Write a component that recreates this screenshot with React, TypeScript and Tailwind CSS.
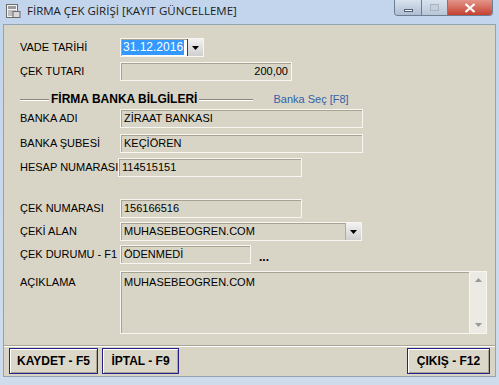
import React from 'react';

const font = { fontFamily: '"Liberation Sans", Arial, sans-serif' };

const Caret = () => (
  <svg width="7" height="4" viewBox="0 0 7 4">
    <path d="M0 0h7L3.5 4z" fill="#000" />
  </svg>
);

function Field({ w, value, right }: { w: number; value?: string; right?: boolean }) {
  return (
    <div
      className={`h-[19px] border border-[#f7f6f1] shadow-[inset_1px_1px_0_#a7a393] bg-[#d9d5c6] flex items-center px-[3px] text-[11px] text-black ${right ? 'justify-end' : ''}`}
      style={{ width: w }}
    >
      {value}
    </div>
  );
}

function Row({ label, children, mt }: { label: string; children: React.ReactNode; mt: string }) {
  return (
    <div className={`flex items-center ${mt}`}>
      <div className="w-[100px] text-[11px] text-black leading-none">{label}</div>
      {children}
    </div>
  );
}

function Btn({ children, w }: { children: React.ReactNode; w: string }) {
  return (
    <div className={`${w} h-[26px] border border-[#25238a] shadow-[inset_1px_1px_0_#fff,inset_-1px_-1px_0_#a8a496] bg-[#dcd8c9] flex items-center justify-center text-[12px] font-bold text-black`}>
      {children}
    </div>
  );
}

export default function App() {
  return (
    <div className="w-[499px] h-[385px] bg-gradient-to-b from-[#c2d5ec] to-[#cfdcec] flex flex-col overflow-hidden" style={font}>
      {/* title bar */}
      <div className="h-[24px] flex items-start shrink-0 relative">
        <div className="flex items-center h-[22px] pl-[5px] gap-[6px]">
          <svg width="16" height="16" viewBox="0 0 16 16">
            <rect x="1.5" y="1.5" width="11" height="13" fill="#f4f4f4" stroke="#6b6b6b" />
            <rect x="3" y="3" width="8" height="3" fill="#9a9a9a" />
            <path d="M3 8h8M3 10h6M3 12h7" stroke="#8a8a8a" />
            <rect x="8" y="8.5" width="7" height="6" fill="#d8d8d8" stroke="#6b6b6b" />
          </svg>
          <span className="text-[11.5px] text-[#1b1b1b]" style={{ fontFamily: '"Open Sans", "Liberation Sans", sans-serif' }}>
            FİRMA ÇEK GİRİŞİ [KAYIT GÜNCELLEME]
          </span>
        </div>
        <div className="absolute right-[6px] top-0 flex h-[16px] rounded-b-[4px] overflow-hidden border border-t-0 border-[#6d7d93]">
          <div className="w-[27px] bg-gradient-to-b from-[#d9e3ef] to-[#aebdd1] flex items-center justify-center border-r border-[#6d7d93]">
            <div className="w-[9px] h-[3px] bg-white border border-[#4f5e73] mt-[5px]" />
          </div>
          <div className="w-[26px] bg-gradient-to-b from-[#d9e3ef] to-[#b9c6d6] flex items-center justify-center border-r border-[#6d7d93]">
            <div className="w-[9px] h-[7px] border border-[#a9b4c3] bg-[#c6d0dc]" />
          </div>
          <div className="w-[44px] bg-gradient-to-b from-[#e3948a] to-[#c3402e] flex items-center justify-center">
            <svg width="12" height="10" viewBox="0 0 12 10">
              <path d="M1.5 1l9 8M10.5 1l-9 8" stroke="#fff" strokeWidth="2.2" />
            </svg>
          </div>
        </div>
      </div>

      {/* client */}
      <div className="flex-1 mx-[3px] mb-[8px] bg-[#d9d5c6] border border-[#93a3b6] flex flex-col">
        <div className="flex-1 pl-[16px] pt-[13px] flex flex-col">
          <Row label="VADE TARİHİ" mt="mt-0">
            <div className="h-[19px] w-[84px] border border-[#f7f6f1] shadow-[inset_1px_1px_0_#a7a393] bg-white flex">
              <div className="flex-1 flex items-center pl-[1px]">
                <span className="bg-[#3399ff] text-white text-[12px] leading-[15px] px-[1px]">31.12.2016</span>
              </div>
              <div className="w-[16px] border-l border-[#404040] bg-gradient-to-b from-[#f2f2f2] to-[#cfcfcf] flex items-center justify-center">
                <Caret />
              </div>
            </div>
          </Row>
          <Row label="ÇEK TUTARI" mt="mt-[5px]">
            <Field w={172} value="200,00" right />
          </Row>

          <div className="flex items-center mt-[9px] h-[18px]">
            <div className="w-[29px] h-px bg-[#8b8878] shadow-[0_1px_0_#fff]" />
            <span className="text-[12px] font-bold text-black px-[2px]">FİRMA BANKA BİLGİLERİ</span>
            <div className="w-[54px] h-px bg-[#8b8878] shadow-[0_1px_0_#fff]" />
            <span className="ml-[20px] text-[11px] text-[#3461a8]">Banka Seç [F8]</span>
          </div>

          <Row label="BANKA ADI" mt="mt-[1px]">
            <Field w={243} value="ZİRAAT BANKASI" />
          </Row>
          <Row label="BANKA ŞUBESİ" mt="mt-[6px]">
            <Field w={243} value="KEÇİÖREN" />
          </Row>
          <Row label="HESAP NUMARASI" mt="mt-[5px]">
            <div className="-ml-[2px]">
              <Field w={184} value="114515151" />
            </div>
          </Row>

          <Row label="ÇEK NUMARASI" mt="mt-[22px]">
            <Field w={182} value="156166516" />
          </Row>
          <Row label="ÇEKİ ALAN" mt="mt-[4px]">
            <div className="h-[19px] w-[242px] border border-[#f7f6f1] shadow-[inset_1px_1px_0_#a7a393] bg-[#d9d5c6] flex">
              <div className="flex-1 flex items-center px-[3px] text-[11px]">MUHASEBEOGREN.COM</div>
              <div className="w-[16px] border-l border-[#b0ad9f] bg-gradient-to-b from-[#f2f2f2] to-[#cfcfcf] flex items-center justify-center">
                <Caret />
              </div>
            </div>
          </Row>
          <Row label="ÇEK DURUMU - F1" mt="mt-[4px]">
            <Field w={131} value="ÖDENMEDİ" />
            <span className="ml-[8px] text-[12px] font-bold leading-none mt-[4px]">...</span>
          </Row>
          <div className="flex items-start mt-[7px]">
            <div className="w-[100px] text-[11px] text-black pt-[3px]">AÇIKLAMA</div>
            <div className="h-[63px] w-[367px] border border-[#f7f6f1] shadow-[inset_1px_1px_0_#a7a393] bg-[#d9d5c6] flex">
              <div className="flex-1 px-[3px] pt-[2px] text-[11px]">MUHASEBEOGREN.COM</div>
              <div className="w-[17px] bg-[#eceae3] border-l border-[#f7f6f1] flex flex-col items-center justify-between py-[6px]">
                <svg width="7" height="4" viewBox="0 0 7 4">
                  <path d="M0 4h7L3.5 0z" fill="#9a9a9a" />
                </svg>
                <svg width="7" height="4" viewBox="0 0 7 4">
                  <path d="M0 0h7L3.5 4z" fill="#9a9a9a" />
                </svg>
              </div>
            </div>
          </div>
        </div>

        {/* footer */}
        <div className="border-t border-[#a9a697] shadow-[inset_0_1px_0_#fff] h-[31px] flex items-center px-[5px] gap-[4px]">
          <Btn w="w-[89px]">KAYDET - F5</Btn>
          <Btn w="w-[77px]">İPTAL - F9</Btn>
          <div className="flex-1" />
          <Btn w="w-[83px]">ÇIKIŞ - F12</Btn>
        </div>
      </div>
    </div>
  );
}
